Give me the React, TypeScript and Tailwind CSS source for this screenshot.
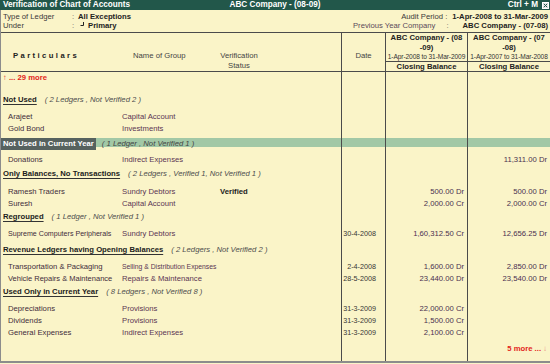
import React from "react";

const COLS = "grid grid-cols-[340px_44px_82px_83px]";
const LINE = "border-l border-[#4b4b4b]";

type Entry = {
  name: string;
  group: string;
  status?: string;
  date?: string;
  cur?: string;
  prev?: string;
  nameCls?: string;
  groupCls?: string;
};

function Cells({
  h,
  c1,
  c2,
  c3,
  c4,
  bg = "",
}: {
  h: string;
  c1?: React.ReactNode;
  c2?: React.ReactNode;
  c3?: React.ReactNode;
  c4?: React.ReactNode;
  bg?: string;
}) {
  return (
    <div className={`${COLS} ${h} ${bg} whitespace-nowrap`}>
      <div className="flex min-w-0 items-center">{c1}</div>
      <div className={`${LINE} flex items-center justify-end pr-[9px] text-[7.2px] text-[#353535]`}>{c2}</div>
      <div className={`${LINE} flex items-center justify-end pr-[3px] text-[#4a3050]`}>{c3}</div>
      <div className={`${LINE} flex items-center justify-end pr-[3px] text-[#4a3050]`}>{c4}</div>
    </div>
  );
}

function Item({ e }: { e: Entry }) {
  return (
    <Cells
      h="h-[12px]"
      c1={
        <>
          <span className={`w-[121px] pl-[7px] text-[#3f2c3b] ${e.nameCls ?? ""}`}>{e.name}</span>
          <span className={`w-[98px] text-[#5a3453] ${e.groupCls ?? ""}`}>{e.group}</span>
          <span className="font-bold text-[#222]">{e.status}</span>
        </>
      }
      c2={e.date}
      c3={e.cur}
      c4={e.prev}
    />
  );
}

function Heading({ title, note }: { title: string; note: string }) {
  return (
    <Cells
      h="h-[12px]"
      c1={
        <>
          <span className="pl-[2px] font-bold text-[#1c1c1c] underline decoration-[#333] underline-offset-2">
            {title}
          </span>
          <span className="ml-[8px] italic text-[#4d4d4d]">{note}</span>
        </>
      }
    />
  );
}

export default function App() {
  return (
    <div className="h-[364px] w-[550px] overflow-hidden bg-[#FAF4C8] font-['Liberation_Sans',Arial,sans-serif] text-[7.7px] leading-[12px] text-[#333]">
      {/* title bar */}
      <div className="grid h-[10px] grid-cols-[1fr_auto_1fr] bg-[#22574A] text-[8.2px] font-bold leading-[10px] text-white">
        <span className="pl-[3px]">Verification of Chart of Accounts</span>
        <span>ABC Company - (08-09)</span>
        <div className="flex items-center justify-end gap-[4px] pr-[1px]">
          <span>Ctrl + M</span>
          <svg width="7" height="7" viewBox="0 0 7 7">
            <rect x="0.5" y="0.5" width="6" height="6" fill="#e8e8e8" stroke="#fff" />
            <path d="M1.8 1.8 L5.2 5.2 M5.2 1.8 L1.8 5.2" stroke="#22574A" strokeWidth="1" />
          </svg>
        </div>
      </div>

      <div className="flex h-[353px] flex-col border-b-2 border-l border-[#8c8c8c]">
        {/* info */}
        <div className="flex justify-between pb-[2px] pt-[2px] leading-[9px]">
          <div className="pl-[2px]">
            <div className="flex">
              <span className="w-[69px] text-[#3a3a3a]">Type of Ledger</span>
              <span className="w-[6px] text-[#666]">:</span>
              <span className="font-bold text-[#222]">All Exceptions</span>
            </div>
            <div className="flex">
              <span className="w-[69px] text-[#3a3a3a]">Under</span>
              <span className="w-[8px] text-[#666]">:</span>
              <svg width="4" height="4" viewBox="0 0 4 4" className="mt-[1px]">
                <path d="M3.5 0 V3.5 H0.5" stroke="#222" strokeWidth="1" fill="none" />
              </svg>
              <span className="ml-[4px] font-bold text-[#222]">Primary</span>
            </div>
          </div>
          <div className="pr-[2px] text-right">
            <div className="flex justify-end">
              <span className="text-[#3a3a3a]">Audit Period :</span>
              <span className="ml-[5px] font-bold text-[#222]">1-Apr-2008 to 31-Mar-2009</span>
            </div>
            <div className="flex justify-end">
              <span className="text-[#5a4a5a]">Previous Year Company</span>
              <span className="ml-[11px] text-[#666]">:</span>
              <span className="ml-[14px] font-bold text-[#222]">ABC Company - (07-08)</span>
            </div>
          </div>
        </div>

        {/* column headings */}
        <div className={`${COLS} h-[40px] border-y border-[#4b4b4b]`}>
          <div className="flex items-start pt-[18px] leading-[10px]">
            <span className="w-[132px] pl-[12px] font-bold tracking-[2.4px] text-[#222]">Particulars</span>
            <span className="w-[86px] text-[#444]">Name of Group</span>
            <span className="w-[40px] text-center text-[#444]">
              Verification
              <br />
              Status
            </span>
          </div>
          <div className={`${LINE} pt-[18px] text-center leading-[10px] text-[#444]`}>Date</div>
          <div className={`${LINE} flex flex-col`}>
            <div className="h-[28px] text-center">
              <div className="font-bold leading-[9.5px] text-[#222]">
                ABC Company - (08
                <br />
                -09)
              </div>
              <div className="whitespace-nowrap text-[6.6px] leading-[9px] tracking-[-0.1px] text-[#333]">
                1-Apr-2008 to 31-Mar-2009
              </div>
            </div>
            <div className="h-[10px] border-t border-[#4b4b4b] text-center font-bold leading-[9px] text-[#222]">
              Closing Balance
            </div>
          </div>
          <div className={`${LINE} flex flex-col`}>
            <div className="h-[28px] text-center">
              <div className="font-bold leading-[9.5px] text-[#222]">
                ABC Company - (07
                <br />
                -08)
              </div>
              <div className="whitespace-nowrap text-[6.6px] leading-[9px] tracking-[-0.1px] text-[#333]">
                1-Apr-2007 to 31-Mar-2008
              </div>
            </div>
            <div className="h-[10px] border-t border-[#4b4b4b] text-center font-bold leading-[9px] text-[#222]">
              Closing Balance
            </div>
          </div>
        </div>

        {/* body */}
        <div className="flex flex-1 flex-col">
          <Cells
            h="h-[9px]"
            c1={
              <span className="pl-[2px] font-bold text-[#e3241b]">
                <span className="font-normal">↑</span> ... 29 more
              </span>
            }
          />
          <Cells h="h-[13px]" />
          <Heading title="Not Used" note="( 2 Ledgers , Not Verified 2 )" />
          <Cells h="h-[5px]" />
          <Item e={{ name: "Arajeet", group: "Capital Account" }} />
          <Item e={{ name: "Gold Bond", group: "Investments" }} />
          <Cells h="h-[3px]" />
          <Cells
            h="h-[9px]"
            bg="bg-[#A2C8A6]"
            c1={
              <>
                <span className="flex h-full items-center bg-[#56625f] px-[2px] font-bold text-white">
                  Not Used in Current Year
                </span>
                <span className="ml-[6px] italic text-[#444]">( 1 Ledger , Not Verified 1 )</span>
              </>
            }
          />
          <Cells h="h-[7px]" />
          <Item e={{ name: "Donations", group: "Indirect Expenses", prev: "11,311.00 Dr" }} />
          <Cells h="h-[2px]" />
          <Heading title="Only Balances, No Transactions" note="( 2 Ledgers , Verified 1, Not Verified 1 )" />
          <Cells h="h-[6px]" />
          <Item e={{ name: "Ramesh Traders", group: "Sundry Debtors", status: "Verified", cur: "500.00 Dr", prev: "500.00 Dr" }} />
          <Item e={{ name: "Suresh", group: "Capital Account", cur: "2,000.00 Cr", prev: "2,000.00 Cr" }} />
          <Cells h="h-[1px]" />
          <Heading title="Regrouped" note="( 1 Ledger , Not Verified 1 )" />
          <Cells h="h-[5px]" />
          <Item
            e={{
              name: "Supreme Computers Peripherals",
              nameCls: "text-[7.1px]",
              group: "Sundry Debtors",
              date: "30-4-2008",
              cur: "1,60,312.50 Cr",
              prev: "12,656.25 Dr",
            }}
          />
          <Cells h="h-[4px]" />
          <Heading title="Revenue Ledgers having Opening Balances" note="( 2 Ledgers , Not Verified 2 )" />
          <Cells h="h-[5px]" />
          <Item
            e={{
              name: "Transportation & Packaging",
              group: "Selling & Distribution Expenses",
              groupCls: "text-[6.8px]",
              date: "2-4-2008",
              cur: "1,600.00 Dr",
              prev: "2,850.00 Dr",
            }}
          />
          <Item
            e={{
              name: "Vehicle Repairs & Maintenance",
              nameCls: "text-[7.5px]",
              group: "Repairs & Maintenance",
              date: "28-5-2008",
              cur: "23,440.00 Dr",
              prev: "23,540.00 Dr",
            }}
          />
          <Cells h="h-[1px]" />
          <Heading title="Used Only in Current Year" note="( 8 Ledgers , Not Verified 8 )" />
          <Cells h="h-[5px]" />
          <Item e={{ name: "Depreciations", group: "Provisions", date: "31-3-2009", cur: "22,000.00 Cr" }} />
          <Item e={{ name: "Dividends", group: "Provisions", date: "31-3-2009", cur: "1,500.00 Cr" }} />
          <Item e={{ name: "General Expenses", group: "Indirect Expenses", date: "31-3-2009", cur: "2,100.00 Cr" }} />
          <Cells h="h-[4px]" />
          <Cells
            h="h-[12px]"
            c4={
              <span className="font-bold text-[#e3241b]">
                5 more ... <span className="font-normal text-[#e98a84]">↓</span>
              </span>
            }
          />
          <Cells h="flex-1" />
        </div>
      </div>
    </div>
  );
}
